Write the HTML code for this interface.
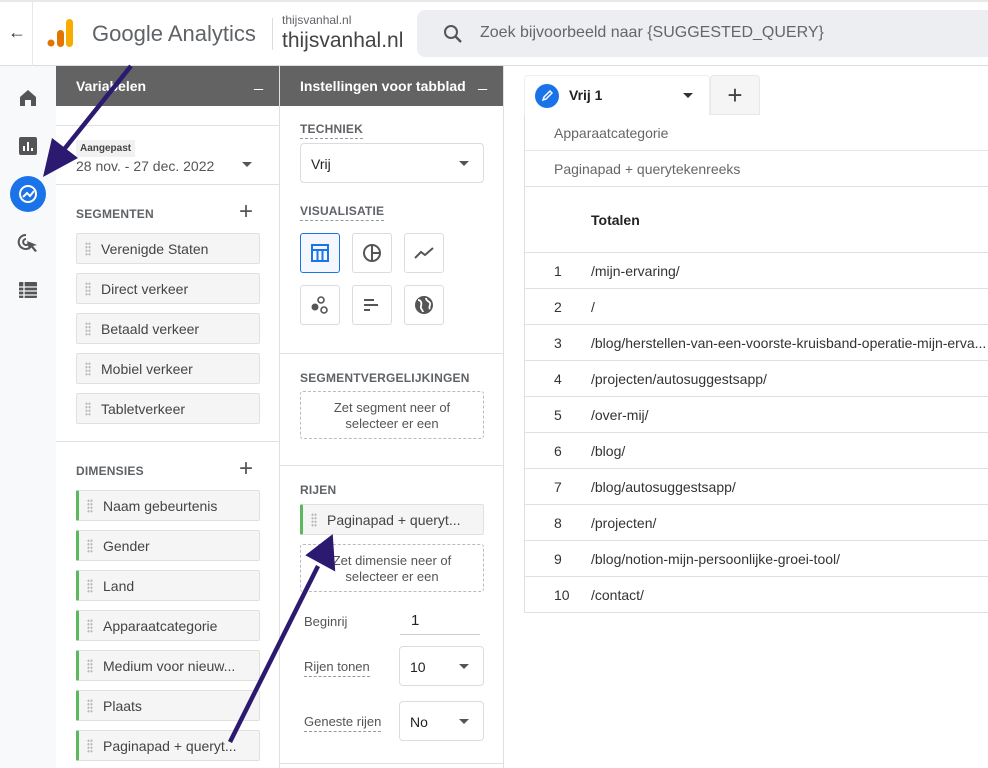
<!DOCTYPE html>
<html><head><meta charset="utf-8"><style>
*{box-sizing:border-box;margin:0;padding:0}
body{width:988px;height:768px;overflow:hidden;background:#fff;font-family:"Liberation Sans",Roboto,sans-serif;color:#3c4043;position:relative}
.abs{position:absolute}
.top{left:0;top:0;width:988px;height:66px;border-bottom:1px solid #dadce0;border-top:2px solid #e8e8e8;background:#fff}
.nav{left:0;top:66px;width:56px;height:702px;background:#f8f9fa}
.ph{height:40px;background:#636363;color:#fff;font-weight:bold;font-size:14px;padding:12px 20px}
.ph span{position:absolute;right:16px;top:8px;font-weight:normal;font-size:16px}
.lbl{font-size:12px;font-weight:bold;color:#5f6368;letter-spacing:.2px}
.dl{border-bottom:1px dashed #999;display:inline-block;padding-bottom:2px}
.chip{position:absolute;left:20px;width:184px;height:31px;background:#f5f5f5;border:1px solid #e0e0e0;border-radius:2px;font-size:14px;color:#444;padding:7px 0 0 24px}
.chip.g{border-left:3px solid #5cb85c}
.chip:before{content:"";position:absolute;left:8px;top:8px;width:6px;height:14px;background:radial-gradient(circle,#bbb 1px,transparent 1.3px) 0 0/3px 3.5px}
.vb{position:absolute;width:40px;height:40px;border:1px solid #dadce0;border-radius:3px;display:flex;align-items:center;justify-content:center}
.sel{border:1px solid #dadce0;border-radius:4px;position:absolute;font-size:14px;color:#222;padding:12px 10px}
.sel:after{content:"";position:absolute;right:14px;top:50%;margin-top:-2px;border:5px solid transparent;border-top-color:#555;border-bottom:0}
.drop{position:absolute;border:1px dashed #bbb;border-radius:3px;text-align:center;font-size:13px;color:#555;line-height:16px;padding-top:8px}
.row{position:absolute;left:524px;width:464px;height:36px;border-bottom:1px solid #e0e0e0;font-size:14px;color:#333}
.row b{position:absolute;left:30px;top:10px;font-weight:normal}
.row i{position:absolute;left:67px;top:10px;font-style:normal;white-space:nowrap}
</style></head><body>
<div class="abs top">
 <div class="abs" style="left:8px;top:20px;font-size:18px;color:#333">←</div>
 <div class="abs" style="left:32px;top:0;width:1px;height:66px;background:#e8e8e8"></div>
 <svg class="abs" style="left:46px;top:16px" width="28" height="30"><circle cx="5" cy="25" r="3.5" fill="#e37400"/><rect x="11" y="12" width="7" height="17" rx="3.5" fill="#e37400"/><rect x="20" y="1" width="7" height="28" rx="3.5" fill="#f9ab00"/></svg>
 <div class="abs" style="left:92px;top:19px;font-size:22px;color:#5f6368">Google Analytics</div>
 <div class="abs" style="left:272px;top:16px;width:1px;height:32px;background:#dadce0"></div>
 <div class="abs" style="left:282px;top:11px;font-size:12px;color:#5f6368">thijsvanhal.nl</div>
 <div class="abs" style="left:282px;top:27px;font-size:21px;color:#444">thijsvanhal.nl</div>
 <div class="abs" style="left:417px;top:8px;width:580px;height:47px;background:#eceef1;border-radius:8px">
  <svg class="abs" style="left:26px;top:14px" width="20" height="20"><circle cx="8" cy="8" r="6" fill="none" stroke="#555" stroke-width="2"/><path d="M12.5 12.5L18 18" stroke="#555" stroke-width="2.4"/></svg>
  <div class="abs" style="left:63px;top:14px;font-size:16px;color:#666">Zoek bijvoorbeeld naar {SUGGESTED_QUERY}</div>
 </div>
</div>
<div class="abs nav">
 <svg class="abs" style="left:18px;top:22px" width="20" height="20"><path d="M2 9L10 2l8 7v9h-5v-6H7v6H2z" fill="#555"/></svg>
 <svg class="abs" style="left:19px;top:71px" width="18" height="18"><rect width="18" height="18" rx="2" fill="#555"/><path d="M5 9v5M9 5v9M13 11v3" stroke="#fff" stroke-width="2"/></svg>
 <div class="abs" style="left:10px;top:110px;width:36px;height:36px;border-radius:50%;background:#1a73e8"></div>
 <svg class="abs" style="left:17px;top:117px" width="22" height="22"><circle cx="11" cy="11" r="8" fill="none" stroke="#fff" stroke-width="2"/><path d="M6 14l4-4 3 3 4-5" fill="none" stroke="#fff" stroke-width="2"/></svg>
 <svg class="abs" style="left:17px;top:166px" width="22" height="22"><path d="M9 3a7 7 0 1 0 6 10M9 7a3 3 0 1 0 3 4" fill="none" stroke="#555" stroke-width="2"/><path d="M10 9l10 4-4 1 4 5-2 1-4-5-2 3z" fill="#555"/></svg>
 <svg class="abs" style="left:19px;top:216px" width="18" height="16"><rect width="18" height="16" rx="1" fill="#555"/><path d="M0 5h18M0 9h18M0 13h18M5 0v16" stroke="#f8f9fa" stroke-width="1.3"/></svg>
</div>
<div class="abs" style="left:56px;top:66px;width:224px;height:702px;border-right:1px solid #e0e0e0;background:#fff">
 <div class="ph">Variabelen<span>_</span></div>
 <div class="abs" style="left:0;top:59px;width:223px;height:1px;background:#e0e0e0"></div>
 <div class="abs" style="left:20px;top:74px;font-size:10px;font-weight:bold;background:#f1f1f1;padding:3px 4px;color:#444">Aangepast</div>
 <div class="abs" style="left:20px;top:92px;font-size:14px;color:#555">28 nov. - 27 dec. 2022</div>
 <div class="abs" style="left:186px;top:96px;border:5px solid transparent;border-top-color:#555"></div>
 <div class="abs" style="left:0;top:118px;width:223px;height:1px;background:#e0e0e0"></div>
 <div class="abs lbl" style="left:20px;top:141px">SEGMENTEN</div>
 <div class="abs" style="left:183px;top:132px;font-size:24px;color:#555;font-weight:300">+</div>
 <div class="chip" style="top:167px">Verenigde Staten</div>
 <div class="chip" style="top:207px">Direct verkeer</div>
 <div class="chip" style="top:247px">Betaald verkeer</div>
 <div class="chip" style="top:287px">Mobiel verkeer</div>
 <div class="chip" style="top:327px">Tabletverkeer</div>
 <div class="abs" style="left:0;top:375px;width:223px;height:1px;background:#e0e0e0"></div>
 <div class="abs lbl" style="left:20px;top:398px">DIMENSIES</div>
 <div class="abs" style="left:183px;top:389px;font-size:24px;color:#555">+</div>
 <div class="chip g" style="top:424px">Naam gebeurtenis</div>
 <div class="chip g" style="top:464px">Gender</div>
 <div class="chip g" style="top:504px">Land</div>
 <div class="chip g" style="top:544px">Apparaatcategorie</div>
 <div class="chip g" style="top:584px">Medium voor nieuw...</div>
 <div class="chip g" style="top:624px">Plaats</div>
 <div class="chip g" style="top:664px">Paginapad + queryt...</div>
</div>
<div class="abs" style="left:280px;top:66px;width:224px;height:702px;border-right:1px solid #e0e0e0;background:#fff">
 <div class="ph">Instellingen voor tabblad<span>_</span></div>
 <div class="abs lbl" style="left:20px;top:56px"><span class="dl">TECHNIEK</span></div>
 <div class="sel" style="left:20px;top:77px;width:184px;height:40px">Vrij</div>
 <div class="abs lbl" style="left:20px;top:138px"><span class="dl">VISUALISATIE</span></div>
 <div class="vb" style="left:20px;top:167px;border-color:#1a73e8;background:#f4f8fe"><svg width="18" height="18"><rect x="1" y="1" width="16" height="16" fill="none" stroke="#1a73e8" stroke-width="2"/><path d="M1 6h16M6.5 6v11M11.5 6v11" stroke="#1a73e8" stroke-width="2"/></svg></div>
 <div class="vb" style="left:72px;top:167px"><svg width="20" height="20"><circle cx="10" cy="10" r="8" fill="none" stroke="#555" stroke-width="2"/><path d="M10 2v16M10 10h8" stroke="#555" stroke-width="2"/></svg></div>
 <div class="vb" style="left:124px;top:167px"><svg width="20" height="14"><path d="M1 12l6-6 4 3 8-7" fill="none" stroke="#555" stroke-width="2"/></svg></div>
 <div class="vb" style="left:20px;top:219px"><svg width="20" height="20"><circle cx="11" cy="5" r="3" fill="none" stroke="#555" stroke-width="1.6"/><circle cx="5" cy="12" r="3.5" fill="#555"/><circle cx="14" cy="15" r="3" fill="none" stroke="#555" stroke-width="1.6"/></svg></div>
 <div class="vb" style="left:72px;top:219px"><svg width="16" height="14"><path d="M0 2h10M0 7h14M0 12h6" stroke="#555" stroke-width="2"/></svg></div>
 <div class="vb" style="left:124px;top:219px"><svg width="20" height="20"><circle cx="10" cy="10" r="9" fill="#555"/><path d="M4 5c3 0 4 3 3 6s2 4 2 6M12 3c0 3 3 3 4 5s-2 4 0 6" fill="none" stroke="#fff" stroke-width="1.8"/></svg></div>
 <div class="abs" style="left:0;top:287px;width:223px;height:1px;background:#e0e0e0"></div>
 <div class="abs lbl" style="left:20px;top:305px">SEGMENTVERGELIJKINGEN</div>
 <div class="drop" style="left:20px;top:325px;width:184px;height:48px">Zet segment neer of<br>selecteer er een</div>
 <div class="abs" style="left:0;top:399px;width:223px;height:1px;background:#e0e0e0"></div>
 <div class="abs lbl" style="left:20px;top:417px">RIJEN</div>
 <div class="chip g" style="top:438px;left:20px">Paginapad + queryt...</div>
 <div class="drop" style="left:20px;top:478px;width:184px;height:48px">Zet dimensie neer of<br>selecteer er een</div>
 <div class="abs" style="left:24px;top:548px;font-size:13px;color:#555">Beginrij</div>
 <div class="abs" style="left:131px;top:546px;font-size:15px;color:#222">1</div>
 <div class="abs" style="left:120px;top:568px;width:80px;height:1px;background:#ccc"></div>
 <div class="abs" style="left:24px;top:593px;font-size:13px;color:#555"><span class="dl">Rijen tonen</span></div>
 <div class="sel" style="left:119px;top:580px;width:85px;height:40px">10</div>
 <div class="abs" style="left:24px;top:648px;font-size:13px;color:#555"><span class="dl">Geneste rijen</span></div>
 <div class="sel" style="left:119px;top:635px;width:85px;height:40px">No</div>
 <div class="abs" style="left:0;top:697px;width:223px;height:1px;background:#e0e0e0"></div>
</div>
<div class="abs" style="left:524px;top:75px;width:186px;height:42px;background:#fff;border-radius:4px 4px 0 0;border:1px solid #eee;border-bottom:0"></div>
<div class="abs" style="left:535px;top:84px;width:24px;height:24px;border-radius:50%;background:#1a73e8"></div>
<svg class="abs" style="left:541px;top:90px" width="12" height="12"><path d="M2 10l1-3 6-6 2 2-6 6z" fill="none" stroke="#fff" stroke-width="1.5"/></svg>
<div class="abs" style="left:569px;top:87px;font-size:14px;font-weight:bold;color:#222">Vrij 1</div>
<div class="abs" style="left:683px;top:93px;border:5px solid transparent;border-top-color:#333"></div>
<div class="abs" style="left:710px;top:75px;width:50px;height:40px;background:#f5f5f5;border:1px solid #e8e8e8;border-radius:4px 4px 0 0;text-align:center;font-size:26px;color:#444;line-height:38px">+</div>
<div class="abs" style="left:524px;top:115px;width:464px;height:498px;background:#fff;border-left:1px solid #e0e0e0"></div>
<div class="row" style="top:115px;border-bottom-color:#e6e6e6"><b style="left:30px;color:#666">Apparaatcategorie</b></div>
<div class="row" style="top:151px"><b style="color:#666">Paginapad + querytekenreeks</b></div>
<div class="row" style="top:187px;height:66px"><i style="top:25px;font-weight:bold;color:#222">Totalen</i></div>
<div class="row" style="top:253px"><b>1</b><i>/mijn-ervaring/</i></div>
<div class="row" style="top:289px"><b>2</b><i>/</i></div>
<div class="row" style="top:325px"><b>3</b><i>/blog/herstellen-van-een-voorste-kruisband-operatie-mijn-erva...</i></div>
<div class="row" style="top:361px"><b>4</b><i>/projecten/autosuggestsapp/</i></div>
<div class="row" style="top:397px"><b>5</b><i>/over-mij/</i></div>
<div class="row" style="top:433px"><b>6</b><i>/blog/</i></div>
<div class="row" style="top:469px"><b>7</b><i>/blog/autosuggestsapp/</i></div>
<div class="row" style="top:505px"><b>8</b><i>/projecten/</i></div>
<div class="row" style="top:541px"><b>9</b><i>/blog/notion-mijn-persoonlijke-groei-tool/</i></div>
<div class="row" style="top:577px"><b style="left:30px">10</b><i>/contact/</i></div>
<svg class="abs" style="left:0;top:0" width="988" height="768">
 <path d="M131 66L62 152" stroke="#2b1a70" stroke-width="4.5"/>
 <path d="M43 177L52 138L78 158z" fill="#2b1a70"/>
 <path d="M230 742L318 566" stroke="#2b1a70" stroke-width="4.5"/>
 <path d="M331 538L309 555L333 568z" fill="#2b1a70" stroke="#2b1a70" stroke-width="4"/>
</svg>
</body></html>
